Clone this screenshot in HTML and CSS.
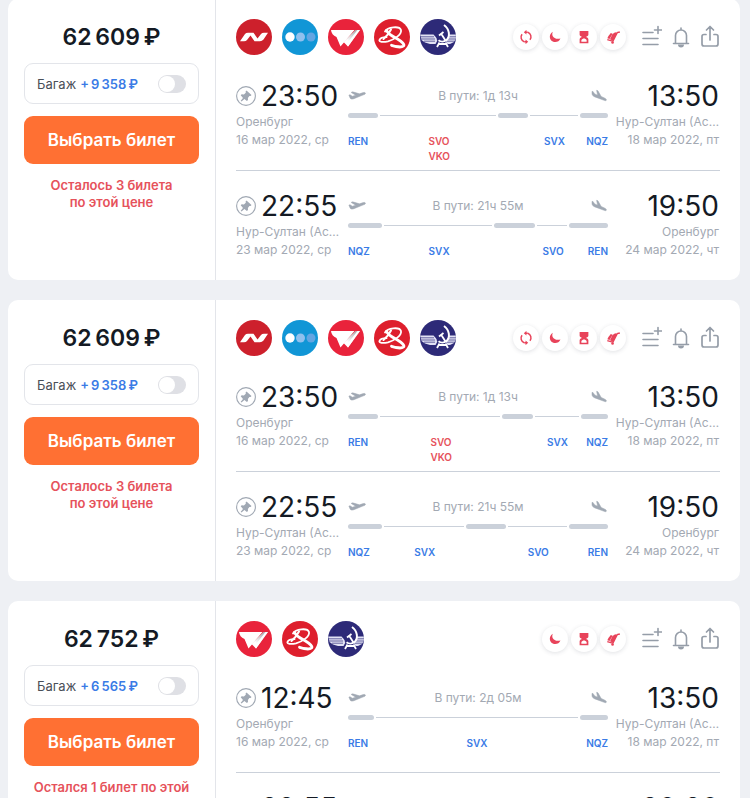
FILE: index.html
```html
<!DOCTYPE html>
<html lang="ru">
<head>
	<meta charset="UTF-8">
	<meta name="viewport" content="width=device-width, initial-scale=1.0">
	<link rel="stylesheet" href="styles.css">
	<title>Оренбург — Нур-Султан</title>
</head>
<body>
	<svg class="sprite" aria-hidden="true">
		<linearGradient id="fold" x1="0" y1="1" x2="1" y2="0">
			<stop offset="0.3" stop-color="#fff"/>
			<stop offset="0.8" stop-color="#b4b4b8"/>
		</linearGradient>
		<clipPath id="round"><circle cx="18" cy="18" r="18"/></clipPath>
		<symbol id="logo-nordwind" viewBox="0 0 36 36">
			<circle cx="18" cy="18" r="18" fill="#cd202c"/>
			<path fill="#fff" d="M4 22.200L9 15q1-1.200 3-1.200h5.500l4 5.700L25 15q1-1.200 3-1.200h4L27.500 20.500q-1.500 1.700-3.500 1.700h-5.500L14.500 16.500 11 21q-1 1.200-3 1.200z"/>
		</symbol>
		<symbol id="logo-pobeda" viewBox="0 0 36 36">
			<circle cx="18" cy="18" r="18" fill="#1196d6"/>
			<circle cx="8" cy="18" r="4.700" fill="#fff"/>
			<circle cx="18.500" cy="18" r="4.500" fill="#8fc0ee"/>
			<circle cx="29" cy="18" r="4.500" fill="#62a5e2"/>
		</symbol>
		<symbol id="logo-redwings" viewBox="0 0 36 36">
			<circle cx="18" cy="18" r="18" fill="#e9233b"/>
			<path fill="#fff" d="M3 11h23.500L12.500 27.500 8.500 18Q3.500 16 3 11z"/>
			<path fill="url(#fold)" d="M27.500 11L15.500 23l4.500 4.500L32 11z"/>
			<path fill="#fff" d="M32 11L20 27.500 18.500 25 29.500 11z"/>
		</symbol>
		<symbol id="logo-azimuth" viewBox="0 0 36 36">
			<circle cx="18" cy="18" r="18" fill="#de1f2d"/>
			<g fill="none" stroke="#fff" stroke-linecap="round">
				<path stroke-width="1.800" d="M11 12.500C13.500 8 25.500 6.500 27 11c1 4.500-6.500 9.500-13 11.300-5 1.200-9.500.7-8.500-1.500.8-1.700 4-2.600 7-2.600"/>
				<path stroke-width="2.800" d="M12.500 11.500c2.500 4.500 6.500 6 11 8.500 4.500 2.700 7.500 5.500 6 7-1.700 1.400-7.500.8-12-.7"/>
				<path stroke-width="2" d="M17 10.500c-1.500 3-4 6.500-7.500 9.500"/>
			</g>
		</symbol>
		<symbol id="logo-aeroflot" viewBox="0 0 36 36">
			<circle cx="18" cy="18" r="18" fill="#2d2a78"/>
			<g clip-path="url(#round)" fill="none" stroke="#fff">
				<path fill="#e2e2f4" stroke="none" d="M0 15.500h13.500l4.500 5-2.500 4.500H10l-5-1.500-3.500-2.500zM36 15.500h-6.500L25.500 21l2 4H30l4-2 2-3z"/>
				<path stroke="#2d2a78" stroke-width="0.700" d="M0 17.800h14M1 20h14M4 22.200h11M36 17.800h-7M36 20h-8M35 22.200h-8"/>
				<circle cx="22" cy="18.500" r="5.500" fill="#2d2a78" stroke="none"/>
				<path stroke-width="2" d="M24 6c5.500 4 6.500 11.500 2.500 15-2.500 2-6 1.800-8 .3"/>
				<path stroke-width="1.800" d="M21 14.500l4.500 7M19 16.500l4.500-3.500M17 28l2.500-4.500M28 28l-2.500-4.500M18.500 25h8"/>
			</g>
		</symbol>
		<symbol id="icon-transfer" viewBox="0 0 16 16">
			<path fill="none" stroke="currentColor" stroke-width="1.700" d="M6 13.500A5.600 5.600 0 0 1 3.500 4.800M10 2.500a5.600 5.600 0 0 1 2.500 8.700"/>
			<path fill="currentColor" d="M8.500-.2v5.400L5.500 2.500zM7.500 10.800v5.400l3-2.700z"/>
			<path fill="none" stroke="currentColor" stroke-width="1.700" d="M8 2.500h2M8 13.500H6"/>
		</symbol>
		<symbol id="icon-moon" viewBox="0 0 16 16">
			<path fill="currentColor" d="M5.500 2C1 4.500 1 11 5.500 13.200c3.300 1.600 7.500 0 8.700-3.500-4 1.200-7.500-.2-8.700-2.500-.8-1.600-.8-3.500 0-5.200z"/>
		</symbol>
		<symbol id="icon-hourglass" viewBox="0 0 16 16">
			<path fill="currentColor" d="M3 1h10v4.500c0 1.300-1.500 2-2.800 2.500 1.300.5 2.800 1.200 2.800 2.500V15H3v-4.500C3 9.200 4.500 8.500 5.800 8 4.500 7.500 3 6.800 3 5.500z"/>
			<path fill="#fff" d="M5 13.300v-1.800c.5-1.200 2-1.800 3-1.800s2.500.6 3 1.800v1.800z"/>
		</symbol>
		<symbol id="icon-luggage" viewBox="0 0 16 16">
			<path fill="currentColor" d="M3 6.500l2.500-3 2 .7L4 10.300l-2.500-1zM7.500 4.500l3-2 2 1L8.200 12.300 4.500 10.500z"/>
			<path fill="none" stroke="currentColor" stroke-width="1.700" d="M1.500 11l7 2M8 12.500L12.800 3l3-.8"/>
			<circle cx="7.500" cy="14.300" r="1.500" fill="currentColor"/>
		</symbol>
		<symbol id="icon-compare" viewBox="0 0 20 20">
			<path stroke="currentColor" stroke-width="1.600" stroke-linecap="round" d="M1 5.500h10M1 11.500h15M1 17.500h15M12.500 3h7M16-.4v6.800"/>
		</symbol>
		<symbol id="icon-bell" viewBox="0 0 20 22">
			<path fill="none" stroke="currentColor" stroke-width="1.600" stroke-linecap="round" stroke-linejoin="round" d="M2.500 17.500h15M4.500 17V9.500a5.500 5.500 0 0 1 11 0V17M10 3.500V2"/>
			<path fill="currentColor" d="M7 18.500h6a3 3 0 0 1-6 0z"/>
		</symbol>
		<symbol id="icon-share" viewBox="0 0 20 24">
			<path fill="none" stroke="currentColor" stroke-width="1.700" stroke-linecap="round" stroke-linejoin="round" d="M6 9.500H4a2 2 0 0 0-2 2V19a2 2 0 0 0 2 2h12a2 2 0 0 0 2-2v-7.500a2 2 0 0 0-2-2h-2M10 15V2M6.500 5L10 1.500 13.500 5"/>
		</symbol>
		<symbol id="icon-pin" viewBox="0 0 20 20">
			<circle cx="10" cy="10" r="9.400" fill="none" stroke="currentColor" stroke-width="1.100"/>
			<path fill="currentColor" d="M10.500 4.500l5 4.500-.9 1-1.200-.1-1.500 2 .1 2.200-1.100 1-2.500-2.200L5.500 15.500l-.8-.8 2.300-2.800L4.700 9.300l1-1 2.200.1 1.900-1.600-.2-1.300z"/>
		</symbol>
		<symbol id="icon-takeoff" viewBox="0 0 20 14">
			<path fill="currentColor" stroke="currentColor" stroke-width="0.600" d="M1 6l1.300-.3L4.800 7.300l3.800-1.200L3.500 3l1.700-.6 7.500 2.200L17 3.200c1.500-.4 2.500.1 2.300.9-.1.700-1 1.200-2.200 1.600L6.500 10c-2 .7-3.400.6-4.200-.9z"/>
		</symbol>
		<symbol id="icon-landing" viewBox="0 0 18 16">
			<path fill="currentColor" stroke="currentColor" stroke-width="0.600" d="M1 2.700l1.300.3 1.800 2.700 3.300 1.300L6.300 1.500l1.500.6 3.700 6.400 4.200 2c1.300.6 2 1.600 1.700 2.300-.3.700-1.400.7-2.600.1L4.300 9C2.100 8.100 1.100 7 1 5z"/>
		</symbol>
	</svg>

	<main class="results">
		<article class="ticket">
			<aside class="offer">
				<div class="price">62&#8201;609&#8201;₽</div>
				<label class="baggage">
					Багаж <b>+&#8201;9&#8201;358&#8201;₽</b>
					<input class="toggle" type="checkbox">
				</label>
				<button class="buy" type="button">Выбрать билет</button>
				<p class="notice">Осталось 3 билета<br>по этой цене</p>
			</aside>
			<div class="flight">
				<header class="flight-header">
					<svg class="logo"><use href="#logo-nordwind"/></svg>
					<svg class="logo"><use href="#logo-pobeda"/></svg>
					<svg class="logo"><use href="#logo-redwings"/></svg>
					<svg class="logo"><use href="#logo-azimuth"/></svg>
					<svg class="logo"><use href="#logo-aeroflot"/></svg>
					<div class="badges">
						<span class="badge"><svg><use href="#icon-transfer"/></svg></span>
						<span class="badge"><svg><use href="#icon-moon"/></svg></span>
						<span class="badge"><svg><use href="#icon-hourglass"/></svg></span>
						<span class="badge"><svg><use href="#icon-luggage"/></svg></span>
					</div>
					<div class="actions">
						<button type="button" aria-label="Сравнить"><svg><use href="#icon-compare"/></svg></button>
						<button type="button" aria-label="Следить за ценой"><svg><use href="#icon-bell"/></svg></button>
						<button type="button" aria-label="Поделиться"><svg><use href="#icon-share"/></svg></button>
					</div>
				</header>
				<section class="leg">
					<div class="point">
						<div class="time"><button class="pin" type="button" aria-label="Закрепить"><svg><use href="#icon-pin"/></svg></button>23:50</div>
						<div>Оренбург</div>
						<div>16 мар 2022, ср</div>
					</div>
					<div class="route">
						<div class="duration">
							<svg><use href="#icon-takeoff"/></svg>
							<span>В пути: 1д 13ч</span>
							<svg><use href="#icon-landing"/></svg>
						</div>
						<div class="track">
							<i style="flex-grow: 31"></i><s style="flex-grow: 119"></s><i style="flex-grow: 31"></i><s style="flex-grow: 49"></s><i style="flex-grow: 29"></i>
						</div>
						<ul class="stops">
							<li style="flex-grow: 80">REN</li>
							<li class="change" style="flex-grow: 115">SVO<br>VKO</li>
							<li style="flex-grow: 42">SVX</li>
							<li>NQZ</li>
						</ul>
					</div>
					<div class="point arrival">
						<div class="time">13:50</div>
						<div>Нур-Султан (Ас…</div>
						<div>18 мар 2022, пт</div>
					</div>
				</section>
				<section class="leg">
					<div class="point">
						<div class="time"><button class="pin" type="button" aria-label="Закрепить"><svg><use href="#icon-pin"/></svg></button>22:55</div>
						<div>Нур-Султан (Ас…</div>
						<div>23 мар 2022, ср</div>
					</div>
					<div class="route">
						<div class="duration">
							<svg><use href="#icon-takeoff"/></svg>
							<span>В пути: 21ч 55м</span>
							<svg><use href="#icon-landing"/></svg>
						</div>
						<div class="track">
							<i style="flex-grow: 35"></i><s style="flex-grow: 111"></s><i style="flex-grow: 42"></i><s style="flex-grow: 31"></s><i style="flex-grow: 40"></i>
						</div>
						<ul class="stops">
							<li style="flex-grow: 80">NQZ</li>
							<li style="flex-grow: 113">SVX</li>
							<li style="flex-grow: 45">SVO</li>
							<li>REN</li>
						</ul>
					</div>
					<div class="point arrival">
						<div class="time">19:50</div>
						<div>Оренбург</div>
						<div>24 мар 2022, чт</div>
					</div>
				</section>
			</div>
		</article>

		<article class="ticket">
			<aside class="offer">
				<div class="price">62&#8201;609&#8201;₽</div>
				<label class="baggage">
					Багаж <b>+&#8201;9&#8201;358&#8201;₽</b>
					<input class="toggle" type="checkbox">
				</label>
				<button class="buy" type="button">Выбрать билет</button>
				<p class="notice">Осталось 3 билета<br>по этой цене</p>
			</aside>
			<div class="flight">
				<header class="flight-header">
					<svg class="logo"><use href="#logo-nordwind"/></svg>
					<svg class="logo"><use href="#logo-pobeda"/></svg>
					<svg class="logo"><use href="#logo-redwings"/></svg>
					<svg class="logo"><use href="#logo-azimuth"/></svg>
					<svg class="logo"><use href="#logo-aeroflot"/></svg>
					<div class="badges">
						<span class="badge"><svg><use href="#icon-transfer"/></svg></span>
						<span class="badge"><svg><use href="#icon-moon"/></svg></span>
						<span class="badge"><svg><use href="#icon-hourglass"/></svg></span>
						<span class="badge"><svg><use href="#icon-luggage"/></svg></span>
					</div>
					<div class="actions">
						<button type="button" aria-label="Сравнить"><svg><use href="#icon-compare"/></svg></button>
						<button type="button" aria-label="Следить за ценой"><svg><use href="#icon-bell"/></svg></button>
						<button type="button" aria-label="Поделиться"><svg><use href="#icon-share"/></svg></button>
					</div>
				</header>
				<section class="leg">
					<div class="point">
						<div class="time"><button class="pin" type="button" aria-label="Закрепить"><svg><use href="#icon-pin"/></svg></button>23:50</div>
						<div>Оренбург</div>
						<div>16 мар 2022, ср</div>
					</div>
					<div class="route">
						<div class="duration">
							<svg><use href="#icon-takeoff"/></svg>
							<span>В пути: 1д 13ч</span>
							<svg><use href="#icon-landing"/></svg>
						</div>
						<div class="track">
							<i style="flex-grow: 31"></i><s style="flex-grow: 123"></s><i style="flex-grow: 32"></i><s style="flex-grow: 45"></s><i style="flex-grow: 28"></i>
						</div>
						<ul class="stops">
							<li style="flex-grow: 82">REN</li>
							<li class="change" style="flex-grow: 116">SVO<br>VKO</li>
							<li style="flex-grow: 39">SVX</li>
							<li>NQZ</li>
						</ul>
					</div>
					<div class="point arrival">
						<div class="time">13:50</div>
						<div>Нур-Султан (Ас…</div>
						<div>18 мар 2022, пт</div>
					</div>
				</section>
				<section class="leg">
					<div class="point">
						<div class="time"><button class="pin" type="button" aria-label="Закрепить"><svg><use href="#icon-pin"/></svg></button>22:55</div>
						<div>Нур-Султан (Ас…</div>
						<div>23 мар 2022, ср</div>
					</div>
					<div class="route">
						<div class="duration">
							<svg><use href="#icon-takeoff"/></svg>
							<span>В пути: 21ч 55м</span>
							<svg><use href="#icon-landing"/></svg>
						</div>
						<div class="track">
							<i style="flex-grow: 35"></i><s style="flex-grow: 82"></s><i style="flex-grow: 41"></i><s style="flex-grow: 61"></s><i style="flex-grow: 40"></i>
						</div>
						<ul class="stops">
							<li style="flex-grow: 66">NQZ</li>
							<li style="flex-grow: 113">SVX</li>
							<li style="flex-grow: 60">SVO</li>
							<li>REN</li>
						</ul>
					</div>
					<div class="point arrival">
						<div class="time">19:50</div>
						<div>Оренбург</div>
						<div>24 мар 2022, чт</div>
					</div>
				</section>
			</div>
		</article>

		<article class="ticket">
			<aside class="offer">
				<div class="price">62&#8201;752&#8201;₽</div>
				<label class="baggage">
					Багаж <b>+&#8201;6&#8201;565&#8201;₽</b>
					<input class="toggle" type="checkbox">
				</label>
				<button class="buy" type="button">Выбрать билет</button>
				<p class="notice">Остался 1 билет по этой</p>
			</aside>
			<div class="flight">
				<header class="flight-header">
					<svg class="logo"><use href="#logo-redwings"/></svg>
					<svg class="logo"><use href="#logo-azimuth"/></svg>
					<svg class="logo"><use href="#logo-aeroflot"/></svg>
					<div class="badges">
						<span class="badge"><svg><use href="#icon-moon"/></svg></span>
						<span class="badge"><svg><use href="#icon-hourglass"/></svg></span>
						<span class="badge"><svg><use href="#icon-luggage"/></svg></span>
					</div>
					<div class="actions">
						<button type="button" aria-label="Сравнить"><svg><use href="#icon-compare"/></svg></button>
						<button type="button" aria-label="Следить за ценой"><svg><use href="#icon-bell"/></svg></button>
						<button type="button" aria-label="Поделиться"><svg><use href="#icon-share"/></svg></button>
					</div>
				</header>
				<section class="leg">
					<div class="point">
						<div class="time"><button class="pin" type="button" aria-label="Закрепить"><svg><use href="#icon-pin"/></svg></button>12:45</div>
						<div>Оренбург</div>
						<div>16 мар 2022, ср</div>
					</div>
					<div class="route">
						<div class="duration">
							<svg><use href="#icon-takeoff"/></svg>
							<span>В пути: 2д 05м</span>
							<svg><use href="#icon-landing"/></svg>
						</div>
						<div class="track">
							<i style="flex-grow: 26"></i><s style="flex-grow: 205"></s><i style="flex-grow: 28"></i>
						</div>
						<ul class="stops">
							<li style="flex-grow: 118">REN</li>
							<li style="flex-grow: 119">SVX</li>
							<li>NQZ</li>
						</ul>
					</div>
					<div class="point arrival">
						<div class="time">13:50</div>
						<div>Нур-Султан (Ас…</div>
						<div>18 мар 2022, пт</div>
					</div>
				</section>
				<section class="leg">
					<div class="point">
						<div class="time"><span class="pin"></span>22:55</div>
					</div>
					<div class="point arrival">
						<div class="time">20:20</div>
					</div>
				</section>
			</div>
		</article>
	</main>
</body>
</html>
```

FILE: styles.css
```css
* {
	box-sizing: border-box;
}

:root {
	--bg: #eef0f4;
	--fg: #141a24;
	--muted: #a3a9b3;
	--line: #cbd1da;
	--border: #e3e5ea;
	--accent: #ff7033;
	--link: #3a7be6;
	--red: #e6525b;
}

body {
	height: 100vh;
	margin: 0;
	overflow: hidden;
	background: var(--bg);
	color: var(--fg);
	font-family: Inter, Roboto, "Liberation Sans", sans-serif;
	font-size: 13px;
	line-height: 18px;
}

button {
	padding: 0;
	font: inherit;
	color: inherit;
	background: none;
	border: none;
	cursor: pointer;
}

svg {
	display: block;
	overflow: visible;
}

.sprite {
	position: absolute;
	width: 0;
	height: 0;
	overflow: hidden;
}

.results {
	display: flex;
	flex-direction: column;
	gap: 20px;
	margin: -1px 10px 0 8px;
}

.ticket {
	display: flex;
	background: #fff;
	border-radius: 10px;
}

/* price column */
.offer {
	flex: 0 0 208px;
	padding: 21px 16px 20px;
	border-right: 1px solid var(--border);
	text-align: center;
}

.price {
	margin-bottom: 9px;
	font-size: 23px;
	font-weight: 600;
	line-height: 34px;
}

.baggage {
	display: flex;
	align-items: center;
	gap: 4px;
	height: 41px;
	margin-bottom: 12px;
	padding: 0 12px;
	border: 1px solid var(--border);
	border-radius: 9px;
	color: #4a4f58;
	cursor: pointer;
}
.baggage b {
	color: var(--link);
	font-weight: 600;
}

.toggle {
	display: flex;
	align-items: center;
	-webkit-appearance: none;
	appearance: none;
	width: 28px;
	height: 18px;
	margin: 0 0 0 auto;
	padding: 1px;
	border-radius: 9px;
	background: #dfe0e5;
	cursor: pointer;
}
.toggle::after {
	content: "";
	width: 16px;
	height: 16px;
	border-radius: 50%;
	background: #fff;
}
.toggle:checked {
	justify-content: flex-end;
	background: var(--link);
}

.buy {
	width: 100%;
	height: 48px;
	border-radius: 9px;
	background: var(--accent);
	color: #fff;
	font-size: 17px;
	font-weight: 600;
}

.notice {
	margin: 13px 0 0;
	color: var(--red);
	font-weight: 600;
	line-height: 17px;
	white-space: nowrap;
}

/* flight column */
.flight {
	flex: 1;
	min-width: 0;
	padding: 20px 20px 0;
}

.flight-header {
	display: flex;
	align-items: center;
	gap: 10px;
	margin-bottom: 6px;
}

.logo {
	width: 36px;
	height: 36px;
}

.badges {
	display: flex;
	gap: 3px;
	margin-left: auto;
}

.badge {
	display: flex;
	align-items: center;
	justify-content: center;
	width: 26px;
	height: 26px;
	border-radius: 50%;
	background: #fff;
	box-shadow: 0 1px 4px rgba(60, 70, 90, 0.16);
	color: #e8435a;
}
.badge svg {
	width: 14px;
	height: 14px;
}

.actions {
	display: flex;
	gap: 9px;
	margin-left: 6px;
	color: #959da8;
}
.actions svg {
	width: 20px;
	height: 24px;
}

.leg {
	display: flex;
	padding: 17px 0 6px;
}
.leg + .leg {
	border-top: 1px solid var(--line);
}

.point {
	flex: 0 0 112px;
	min-height: 86px;
	color: var(--muted);
	font-size: 12px;
	white-space: nowrap;
}

.arrival {
	margin-left: auto;
	padding-right: 1px;
	text-align: right;
}

.time {
	display: flex;
	align-items: center;
	gap: 5px;
	height: 35px;
	color: var(--fg);
	font-size: 28px;
	line-height: 34px;
}
.arrival .time {
	justify-content: flex-end;
}

.pin,
.pin svg {
	width: 20px;
	height: 20px;
	color: #a0a8b3;
}

.route {
	flex: 1;
	min-width: 0;
}

.duration {
	display: flex;
	align-items: center;
	justify-content: space-between;
	height: 35px;
	color: var(--muted);
	font-size: 12px;
}
.duration svg {
	width: 18px;
	height: 14px;
	color: #a0a8b3;
}

.track {
	display: flex;
	align-items: center;
}
.track i {
	flex-basis: 0;
	height: 5px;
	border-radius: 3px;
	background: var(--line);
}
.track s {
	flex-basis: 0;
	height: 1px;
	border: solid #fff;
	border-width: 0 2px;
	background: var(--line);
}

.stops {
	display: flex;
	margin: 16px 0 0;
	padding: 0;
	list-style: none;
	color: var(--link);
	font-size: 10px;
	font-weight: 600;
	line-height: 15px;
}
.stops li {
	flex-basis: 0;
}
.stops li:last-child {
	flex-basis: auto;
}

.change {
	color: var(--red);
}
```
